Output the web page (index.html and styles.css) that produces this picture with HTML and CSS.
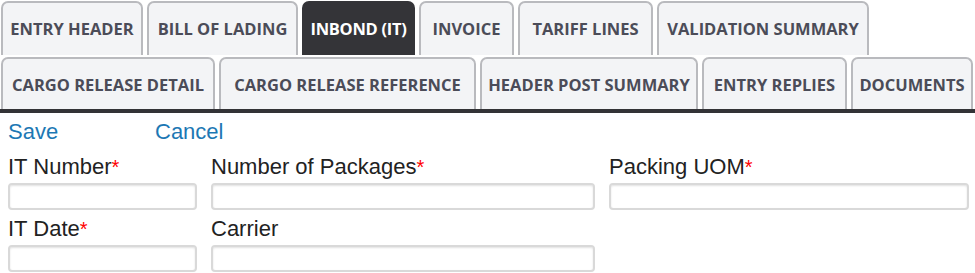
FILE: index.html
```html
<!DOCTYPE html>
<html lang="en">
<head>
<meta charset="utf-8">
<title>Inbond (IT)</title>
<link rel="stylesheet" href="styles.css">
</head>
<body>
<div class="tabs">
  <div class="tab-row row1">
    <div class="tab t-entry">ENTRY HEADER</div>
    <div class="tab t-bill">BILL OF LADING</div>
    <div class="tab t-inbond active">INBOND (IT)</div>
    <div class="tab t-invoice">INVOICE</div>
    <div class="tab t-tariff">TARIFF LINES</div>
    <div class="tab t-valid">VALIDATION SUMMARY</div>
  </div>
  <div class="tab-row row2">
    <div class="tab t-crd">CARGO RELEASE DETAIL</div>
    <div class="tab t-crr">CARGO RELEASE REFERENCE</div>
    <div class="tab t-hps">HEADER POST SUMMARY</div>
    <div class="tab t-replies">ENTRY REPLIES</div>
    <div class="tab t-docs">DOCUMENTS</div>
  </div>
</div>
<div class="bar"></div>
<div class="actions">
  <a class="link link-save" href="#">Save</a>
  <a class="link" href="#">Cancel</a>
</div>
<div class="form-grid">
  <div class="field">
    <label class="label">IT Number<span class="req">*</span></label>
    <input class="input" type="text">
  </div>
  <div class="field">
    <label class="label">Number of Packages<span class="req">*</span></label>
    <input class="input" type="text">
  </div>
  <div class="field">
    <label class="label">Packing UOM<span class="req">*</span></label>
    <input class="input" type="text">
  </div>
  <div class="field">
    <label class="label">IT Date<span class="req">*</span></label>
    <input class="input" type="text">
  </div>
  <div class="field">
    <label class="label">Carrier</label>
    <input class="input" type="text">
  </div>
</div>
</body>
</html>
```
FILE: styles.css
```css
html, body {
  margin: 0;
  padding: 0;
  background: #ffffff;
}

.tabs {
  padding-left: 1px;
}

.tab-row {
  display: flex;
  gap: 4px;
}

.row1 {
  margin-top: 1px;
}

.row1 .tab {
  height: 54px;
  padding-bottom: 2px;
}

.row2 {
  margin-top: 2px;
}

.row2 .tab {
  height: 52px;
}

.tab {
  box-sizing: border-box;
  flex: none;
  display: flex;
  align-items: center;
  justify-content: center;
  padding: 0;
  background: #f3f4f6;
  border: 2px solid #b9babe;
  border-bottom: none;
  border-radius: 7px 7px 0 0;
  font-family: "Open Sans", "Noto Sans", sans-serif;
  font-weight: 700;
  font-size: 16.5px;
  color: #4b4c58;
  white-space: nowrap;
}

.t-entry { width: 142px; }
.t-bill { width: 151px; }
.t-inbond { width: 113px; letter-spacing: -0.3px; }
.t-invoice { width: 95px; }
.t-tariff { width: 135px; }
.t-valid { width: 212px; }
.t-crd { width: 214px; }
.t-crr { width: 257px; }
.t-hps { width: 218px; }
.t-replies { width: 145px; }
.t-docs { width: 122px; }

.tab.active {
  background: #343438;
  border-color: #343438;
  color: #ffffff;
}

.bar {
  height: 4px;
  background: #333336;
}

.actions {
  display: flex;
  margin-top: 7px;
  padding-left: 8px;
  font-family: "Liberation Sans", Arial, sans-serif;
  font-size: 22px;
  line-height: 24px;
}

.link {
  color: #1d78b4;
  text-decoration: none;
}

.link-save {
  width: 147px;
}

.form-grid {
  display: grid;
  grid-template-columns: 189px 384px 360px;
  column-gap: 14px;
  row-gap: 7px;
  margin-top: 11px;
  padding-left: 8px;
}

.field {
  display: flex;
  flex-direction: column;
}

.label {
  font-family: "Liberation Sans", Arial, sans-serif;
  font-size: 22px;
  line-height: 24px;
  color: #222222;
  margin-bottom: 4px;
}

.req {
  color: #ff0000;
  font-size: 20px;
}

.input {
  box-sizing: border-box;
  height: 27px;
  width: 100%;
  margin: 0;
  border: 2px solid #d9d9d9;
  border-radius: 4px;
  background: #ffffff;
  box-shadow: inset 0 1px 2px rgba(0, 0, 0, 0.12);
  outline: none;
}
```
